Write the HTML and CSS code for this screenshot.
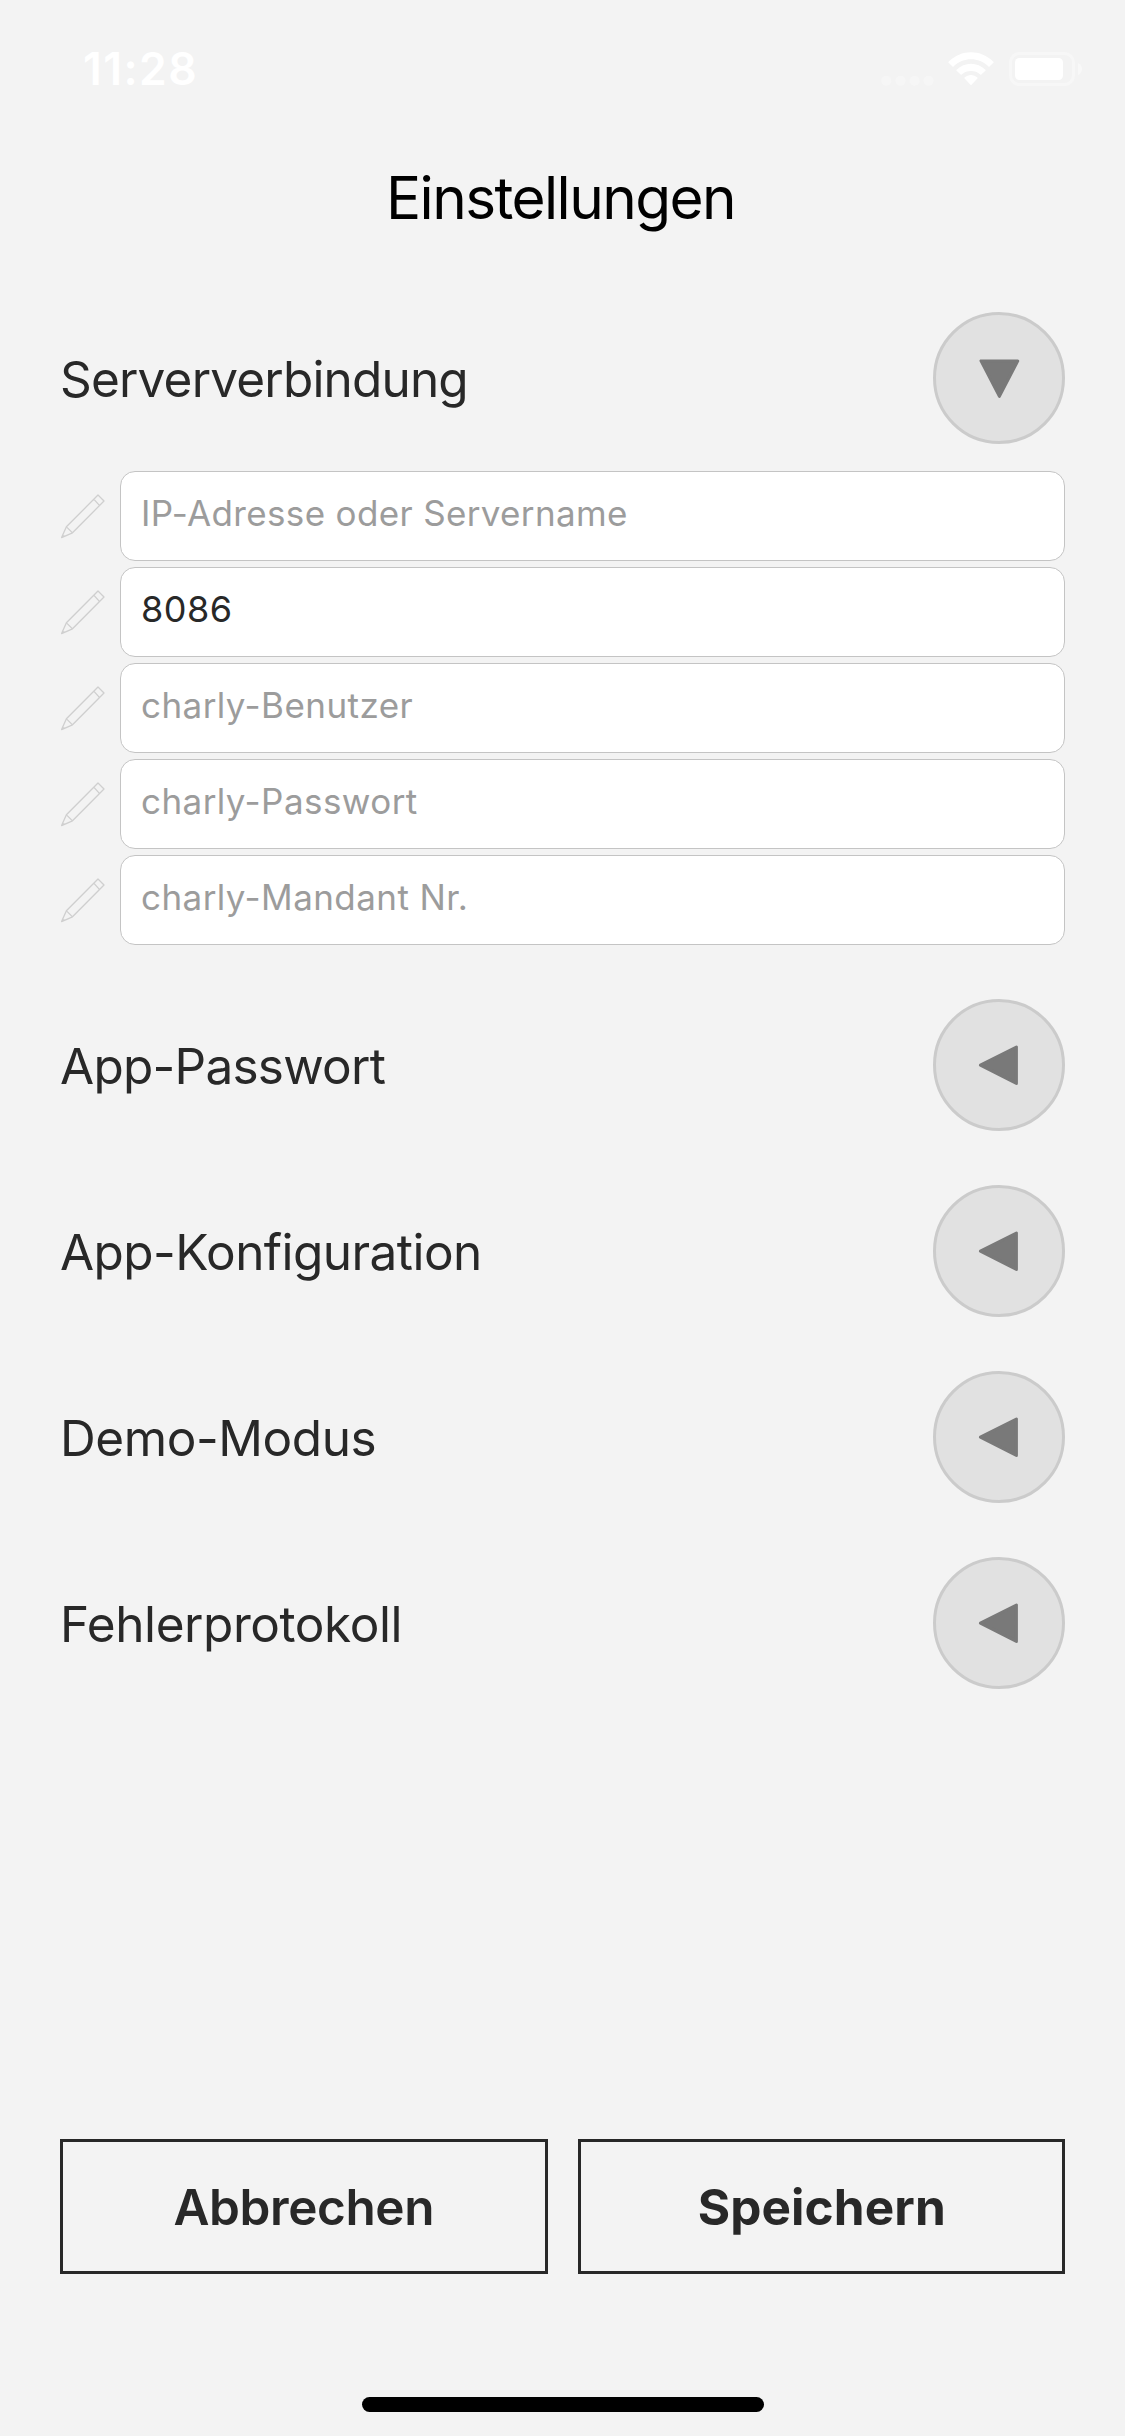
FILE: index.html
```html
<!DOCTYPE html>
<html lang="de">
<head>
<meta charset="utf-8">
<title>Einstellungen</title>
<link rel="stylesheet" href="styles.css">
</head>
<body>
<svg class="defs" aria-hidden="true">
  <symbol id="pencil" viewBox="0 0 45 45">
    <path d="M1.6 43.6 6.4 32.8 38 1 44 7 12.5 38.8ZM34 5.4 39.4 11.4M7 33.4 12 38.4M1.6 43.6 4.4 41.4" fill="none" stroke="#cfcfcf" stroke-width="1.3" stroke-linejoin="round"/>
  </symbol>
  <symbol id="left" viewBox="0 0 132 132">
    <path d="M47.4 66.2 83.4 48 83.4 84.4Z"/>
  </symbol>
  <symbol id="down" viewBox="0 0 132 132">
    <path d="M48 48.9 84.8 48.9 66.4 84.4Z"/>
  </symbol>
</svg>

<div class="screen">
  <header class="status">
    <span class="time">11:28</span>
    <div class="status-icons">
      <svg class="dots" width="54" height="34" viewBox="0 0 54 34" fill="#f6f6f6"><circle cx="5.3" cy="28.7" r="5"/><circle cx="19.5" cy="28.7" r="5"/><circle cx="33.6" cy="28.7" r="5"/><circle cx="47.5" cy="28.7" r="5"/></svg>
      <svg class="wifi" width="46" height="34" viewBox="0 0 46 34" fill="#fff"><path d="M.6 9.8C13-3 33-3 45.4 9.8q.5.5 0 1L41.5 14.4q-.5.5-1 0C30.5 4.8 15.500 4.800 5.500 14.400q-.5.5-1 0L.6 10.800q-.5-.5 0-1Z"/><path d="M8.600 17.800C16.500 9.800 29.500 9.800 37.400 17.800q.5.5 0 1L33.300 22.400q-.5.5-1 0C27.500 17.900 18.500 17.900 13.700 22.400q-.5.5-1 0L8.600 18.800q-.5-.5 0-1Z"/><path d="M16.600 25.600C20.200 22.200 25.800 22.200 29.400 25.600q.5.5 0 1L23.500 32.800q-.5.5-1 0L16.600 26.600q-.5-.5 0-1Z"/></svg>
      <svg class="battery" width="74" height="34" viewBox="0 0 74 34"><rect x="1.500" y="1.500" width="63" height="31" rx="9" fill="none" stroke="#f7f7f7" stroke-width="3"/><rect x="6" y="6" width="48" height="22" rx="4.500" fill="#fff"/><path d="M69 11Q73 13 73 17T69 23Z" fill="#f8f8f8"/></svg>
    </div>
  </header>

  <h1 class="title">Einstellungen</h1>

  <main class="sections">
    <section>
      <div class="row"><h2 class="label label-server">Serververbindung</h2><button class="toggle" aria-label="Zuklappen"><svg><use href="#down"/></svg></button></div>
      <div class="fields">
        <label class="field"><svg class="pencil"><use href="#pencil"/></svg><input class="server" placeholder="IP-Adresse oder Servername"></label>
        <label class="field"><svg class="pencil"><use href="#pencil"/></svg><input class="port" value="8086"></label>
        <label class="field"><svg class="pencil"><use href="#pencil"/></svg><input placeholder="charly-Benutzer"></label>
        <label class="field"><svg class="pencil"><use href="#pencil"/></svg><input placeholder="charly-Passwort"></label>
        <label class="field"><svg class="pencil"><use href="#pencil"/></svg><input placeholder="charly-Mandant Nr."></label>
      </div>
    </section>
    <section class="row"><h2 class="label label-password">App-Passwort</h2><button class="toggle" aria-label="Aufklappen"><svg><use href="#left"/></svg></button></section>
    <section class="row"><h2 class="label label-config">App-Konfiguration</h2><button class="toggle" aria-label="Aufklappen"><svg><use href="#left"/></svg></button></section>
    <section class="row"><h2 class="label">Demo-Modus</h2><button class="toggle" aria-label="Aufklappen"><svg><use href="#left"/></svg></button></section>
    <section class="row"><h2 class="label">Fehlerprotokoll</h2><button class="toggle" aria-label="Aufklappen"><svg><use href="#left"/></svg></button></section>
  </main>

  <footer class="actions">
    <button class="action">Abbrechen</button>
    <button class="action action-primary">Speichern</button>
  </footer>
  <div class="home-bar"></div>
</div>
</body>
</html>
```
FILE: styles.css
```css
* { box-sizing: border-box; }

body {
  margin: 0;
  background: #f3f3f3;
  color: #282828;
  font-family: Inter, "Liberation Sans", sans-serif;
}

button, input { font-family: inherit; color: inherit; }

.defs { display: none; }

.screen {
  display: flex;
  flex-direction: column;
  width: 1125px;
  height: 2436px;
  padding-bottom: 24px;
}

/* Status bar */
.status {
  display: flex;
  justify-content: space-between;
  align-items: center;
  height: 138px;
  padding: 0 42px 0 83px;
  color: #fff;
}
.time { font-size: 44.5px; font-weight: 600; letter-spacing: 1.4px; }
.status-icons { display: flex; }
.wifi { margin: 0 15px 0 13px; }

.title {
  margin: 0 0 54px;
  height: 120px;
  padding-right: 4px;
  line-height: 120px;
  text-align: center;
  font-size: 58.5px;
  font-weight: 400;
  letter-spacing: -1.58px;
  color: #000;
}

/* Collapsible sections */
.sections {
  display: flex;
  flex-direction: column;
  gap: 54px;
  flex: 1;
  padding: 0 60px;
}
.row {
  display: flex;
  justify-content: space-between;
  align-items: center;
  height: 132px;
}
.label {
  margin: 0;
  padding-top: 1px;
  font-size: 49.5px;
  font-weight: 400;
  letter-spacing: -0.43px;
}
.label-server { letter-spacing: -0.82px; }
.label-password { letter-spacing: -0.75px; }
.label-config { letter-spacing: -0.56px; }

.toggle {
  width: 132px;
  height: 132px;
  padding: 0;
  border: 3px solid #cbcbcb;
  border-radius: 50%;
  background: #e1e1e1;
}
.toggle svg {
  display: block;
  width: 132px;
  height: 132px;
  margin: -3px;
  fill: #797979;
  stroke: #797979;
  stroke-width: 3px;
  stroke-linejoin: round;
}

/* Server fields */
.fields {
  display: flex;
  flex-direction: column;
  gap: 6px;
  margin-top: 27px;
}
.field {
  display: flex;
  align-items: center;
  gap: 15px;
}
.pencil { width: 45px; height: 45px; flex: none; }
.field input {
  flex: 1;
  height: 90px;
  padding: 0 20px 7px;
  border: 1px solid #c4c4c4;
  border-radius: 15px;
  background: #fff;
  font-size: 35px;
  letter-spacing: 0.43px;
}
.field .server { letter-spacing: 0.34px; }
.field .port { font-size: 36px; letter-spacing: 0.5px; }
.field input::placeholder { color: #9c9c9c; opacity: 1; }

/* Bottom buttons */
.actions {
  display: grid;
  grid-template-columns: 1fr 1fr;
  gap: 30px;
  padding: 0 60px;
}
.action {
  height: 135px;
  padding: 0;
  border: 3px solid #282828;
  background: none;
  font-size: 49.5px;
  font-weight: 600;
  letter-spacing: -0.4px;
}
.action-primary {
  padding-left: 1px;
  font-weight: 700;
  letter-spacing: 0.1px;
}

.home-bar {
  width: 402px;
  height: 15px;
  margin: 123px auto 0;
  border-radius: 8px;
  background: #000;
}
```
